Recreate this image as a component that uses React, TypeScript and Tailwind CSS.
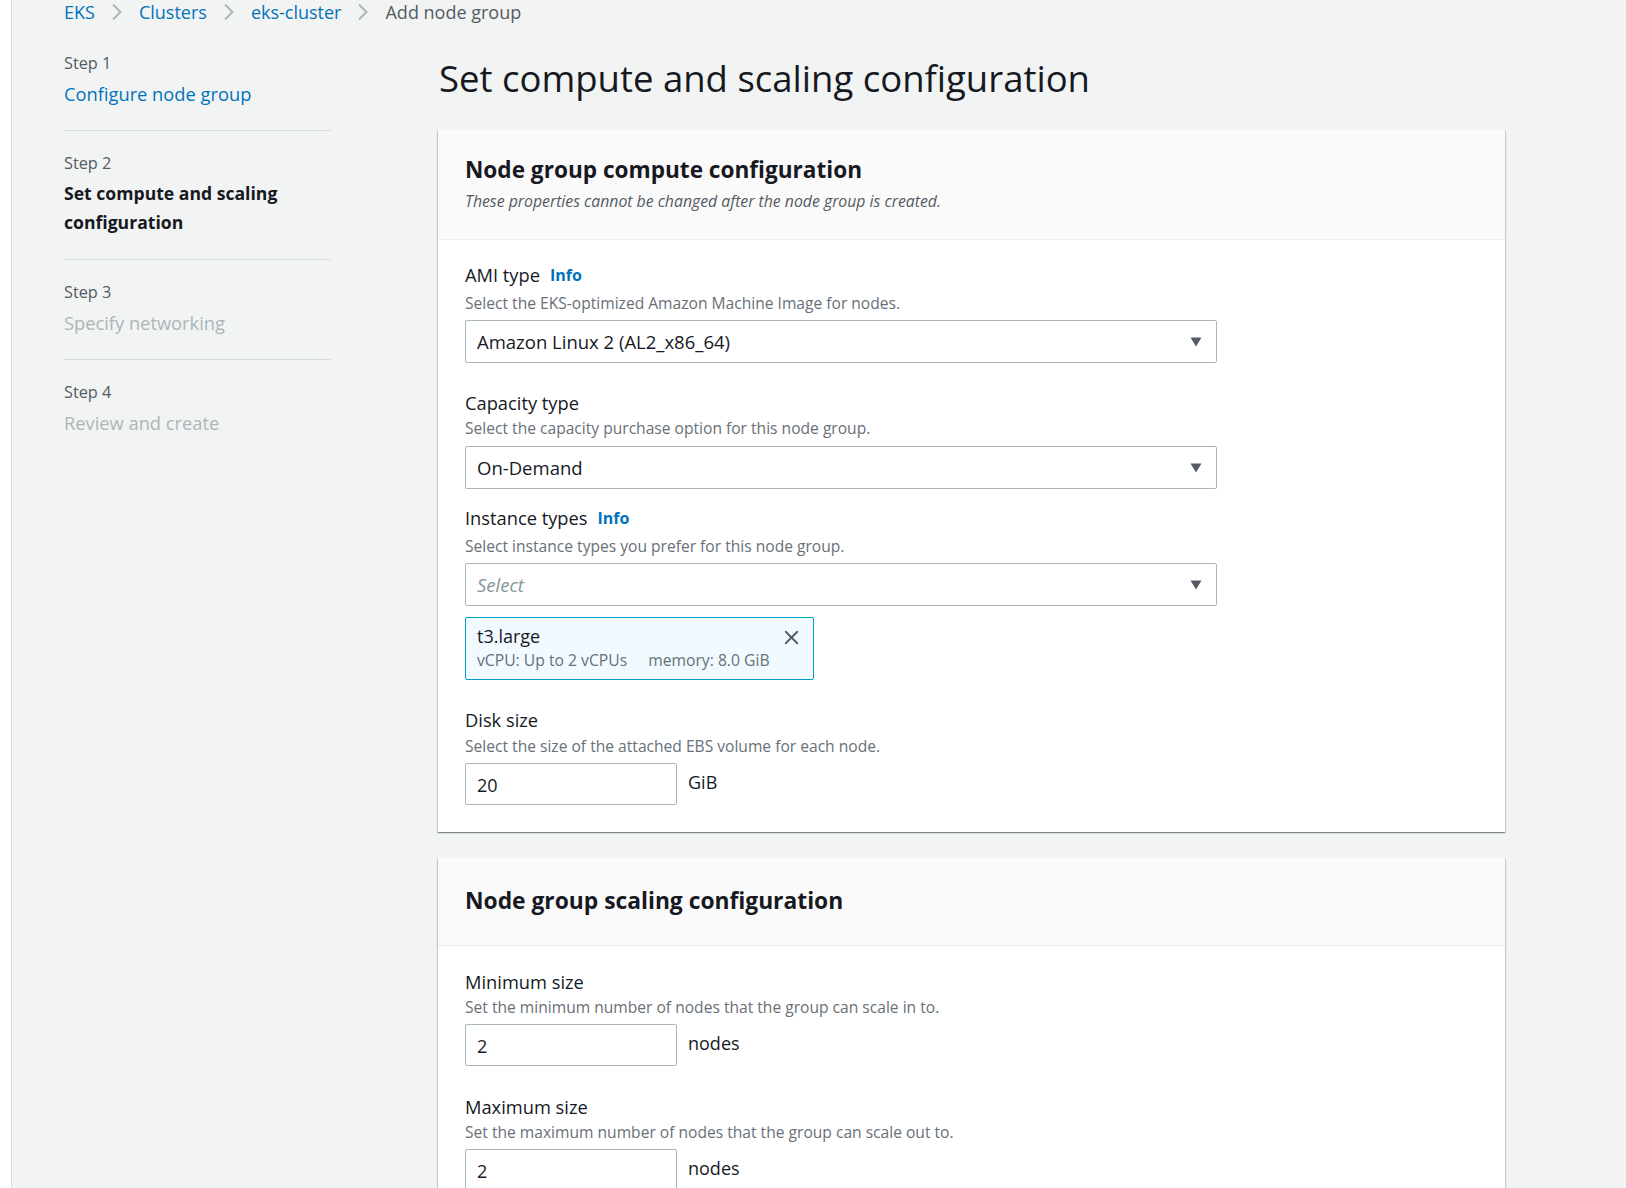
import { X } from "lucide-react";

const font = { fontFamily: '"Open Sans", "Noto Sans", sans-serif' };

function Chevron() {
  return (
    <svg width="12" height="18" viewBox="0 0 12 18" className="mx-[16px]">
      <path d="M2 1.5 L9.5 9 L2 16.5" fill="none" stroke="#aab7b8" strokeWidth="2" />
    </svg>
  );
}

function Caret() {
  return (
    <svg width="12" height="10" viewBox="0 0 12 10">
      <path d="M0.5 0.5 H11.5 L6 9.5 Z" fill="#545b64" />
    </svg>
  );
}

function Select({ value, placeholder }: { value?: string; placeholder?: string }) {
  return (
    <div className="h-[43px] w-[752px] flex items-center justify-between border border-[#aab7b8] rounded-[2px] bg-white pl-[11px] pr-[14px]">
      {value ? (
        <span className="text-[18.5px] text-[#16191f]">{value}</span>
      ) : (
        <span className="text-[18.5px] italic text-[#879596]">{placeholder}</span>
      )}
      <Caret />
    </div>
  );
}

function NumberInput({ value, unit }: { value: string; unit: string }) {
  return (
    <div className="flex items-start">
      <div className="h-[42px] w-[212px] flex items-center border border-[#aab7b8] rounded-[2px] bg-white pl-[11px] pt-[2px]">
        <span className="text-[18px] text-[#16191f]">{value}</span>
      </div>
      <span className="ml-[11px] mt-[6px] text-[18px] text-[#16191f]">{unit}</span>
    </div>
  );
}

function Label({ text, info, className }: { text: string; info?: boolean; className?: string }) {
  return (
    <div className={"h-[26px] flex items-center text-[18.3px] text-[#16191f] " + (className ?? "")}>
      {text}
      {info && <span className="ml-[10px] text-[16px] font-bold text-[#0073bb]">Info</span>}
    </div>
  );
}

function Desc({ text, className }: { text: string; className?: string }) {
  return <div className={"h-[22px] leading-[22px] text-[15.6px] text-[#687078] " + (className ?? "")}>{text}</div>;
}

const steps = [
  { n: "Step 1", title: "Configure node group", state: "link" },
  { n: "Step 2", title: "Set compute and scaling configuration", state: "active" },
  { n: "Step 3", title: "Specify networking", state: "disabled" },
  { n: "Step 4", title: "Review and create", state: "disabled" },
];

const cardShadow =
  "bg-white shadow-[0_1px_1px_0_rgba(0,28,36,0.3),1px_1px_1px_0_rgba(0,28,36,0.15),-1px_1px_1px_0_rgba(0,28,36,0.15)]";

export default function App() {
  return (
    <div style={font} className="h-[1188px] overflow-hidden flex bg-[#f2f3f3]">
      <div className="w-[12px] shrink-0 bg-white border-r border-[#d5dbdb]" />

      <div className="flex-1 pl-[52px]">
        {/* breadcrumbs */}
        <div className="h-[24px] flex items-center text-[18px]">
          <a className="text-[#0073bb]">EKS</a>
          <Chevron />
          <a className="text-[#0073bb]">Clusters</a>
          <Chevron />
          <a className="text-[#0073bb]">eks-cluster</a>
          <Chevron />
          <span className="text-[#545b64]">Add node group</span>
        </div>

        <div className="flex">
          {/* wizard steps */}
          <ul className="w-[267px] shrink-0 pt-[27px]">
            {steps.map((s, i) => (
              <li
                key={s.n}
                className={
                  (i === 0 ? "" : "pt-[20px] ") +
                  (i < steps.length - 1 ? "border-b border-[#d5dbdb] pb-[22px]" : "")
                }
              >
                <div className="h-[24px] leading-[24px] text-[16.3px] text-[#545b64]">{s.n}</div>
                <div
                  className={
                    "mt-[4px] leading-[29px] " +
                    (s.state === "link"
                      ? "text-[18.3px] text-[#0073bb]"
                      : s.state === "active"
                      ? "text-[17.6px] font-bold text-[#16191f] pr-[40px]"
                      : "text-[18.3px] text-[#aab7b8]")
                  }
                >
                  {s.title}
                </div>
              </li>
            ))}
          </ul>

          {/* main */}
          <div className="ml-[107px] w-[1067px] shrink-0">
            <h1 className="h-[60px] mt-[24px] flex items-center text-[36.5px] text-[#16191f] pl-[1px]">
              Set compute and scaling configuration
            </h1>

            <div className={"mt-[22px] " + cardShadow}>
              <div className="bg-[#fafafa] border-b border-[#eaeded] px-[27px] pt-[24px] pb-[27px]">
                <h2 className="h-[32px] flex items-center text-[22.6px] font-bold text-[#16191f]">
                  Node group compute configuration
                </h2>
                <div className="mt-[4px] h-[22px] leading-[22px] text-[15.8px] italic text-[#545b64]">
                  These properties cannot be changed after the node group is created.
                </div>
              </div>

              <div className="px-[27px] pt-[22px] pb-[27px]">
                <Label text="AMI type" info />
                <Desc text="Select the EKS-optimized Amazon Machine Image for nodes." className="mt-[4px]" />
                <div className="mt-[6px]">
                  <Select value="Amazon Linux 2 (AL2_x86_64)" />
                </div>

                <Label text="Capacity type" className="mt-[27px]" />
                <Desc text="Select the capacity purchase option for this node group." className="mt-[1px]" />
                <div className="mt-[7px]">
                  <Select value="On-Demand" />
                </div>

                <Label text="Instance types" info className="mt-[16px]" />
                <Desc text="Select instance types you prefer for this node group." className="mt-[4px]" />
                <div className="mt-[6px]">
                  <Select placeholder="Select" />
                </div>

                <div className="mt-[11px] w-[349px] h-[63px] border border-[#00a1c9] rounded-[2px] bg-[#f1faff] relative pl-[11px] pt-[6px]">
                  <div className="h-[25px] leading-[25px] text-[18px] text-[#16191f]">t3.large</div>
                  <div className="h-[22px] leading-[22px] text-[15.7px] text-[#687078]">
                    vCPU: Up to 2 vCPUs<span className="ml-[21px]">memory: 8.0 GiB</span>
                  </div>
                  <X className="absolute right-[10px] top-[8px] text-[#545b64]" size={23} strokeWidth={2} />
                </div>

                <Label text="Disk size" className="mt-[27px]" />
                <Desc text="Select the size of the attached EBS volume for each node." className="mt-[2px]" />
                <div className="mt-[6px]">
                  <NumberInput value="20" unit="GiB" />
                </div>
              </div>
            </div>

            <div className={"mt-[26px] " + cardShadow}>
              <div className="bg-[#fafafa] border-b border-[#eaeded] px-[27px] pt-[27px] pb-[28px]">
                <h2 className="h-[32px] flex items-center text-[22.8px] font-bold text-[#16191f]">
                  Node group scaling configuration
                </h2>
              </div>
              <div className="px-[27px] pt-[23px] pb-[28px]">
                <Label text="Minimum size" />
                <Desc text="Set the minimum number of nodes that the group can scale in to." className="mt-[1px]" />
                <div className="mt-[6px]">
                  <NumberInput value="2" unit="nodes" />
                </div>

                <Label text="Maximum size" className="mt-[28px]" />
                <Desc text="Set the maximum number of nodes that the group can scale out to." className="mt-[1px]" />
                <div className="mt-[6px]">
                  <NumberInput value="2" unit="nodes" />
                </div>

                <Label text="Desired size" className="mt-[28px]" />
                <Desc text="Set the desired number of nodes that the group should launch with initially." className="mt-[1px]" />
                <div className="mt-[6px]">
                  <NumberInput value="2" unit="nodes" />
                </div>
              </div>
            </div>
          </div>
        </div>
      </div>
    </div>
  );
}
